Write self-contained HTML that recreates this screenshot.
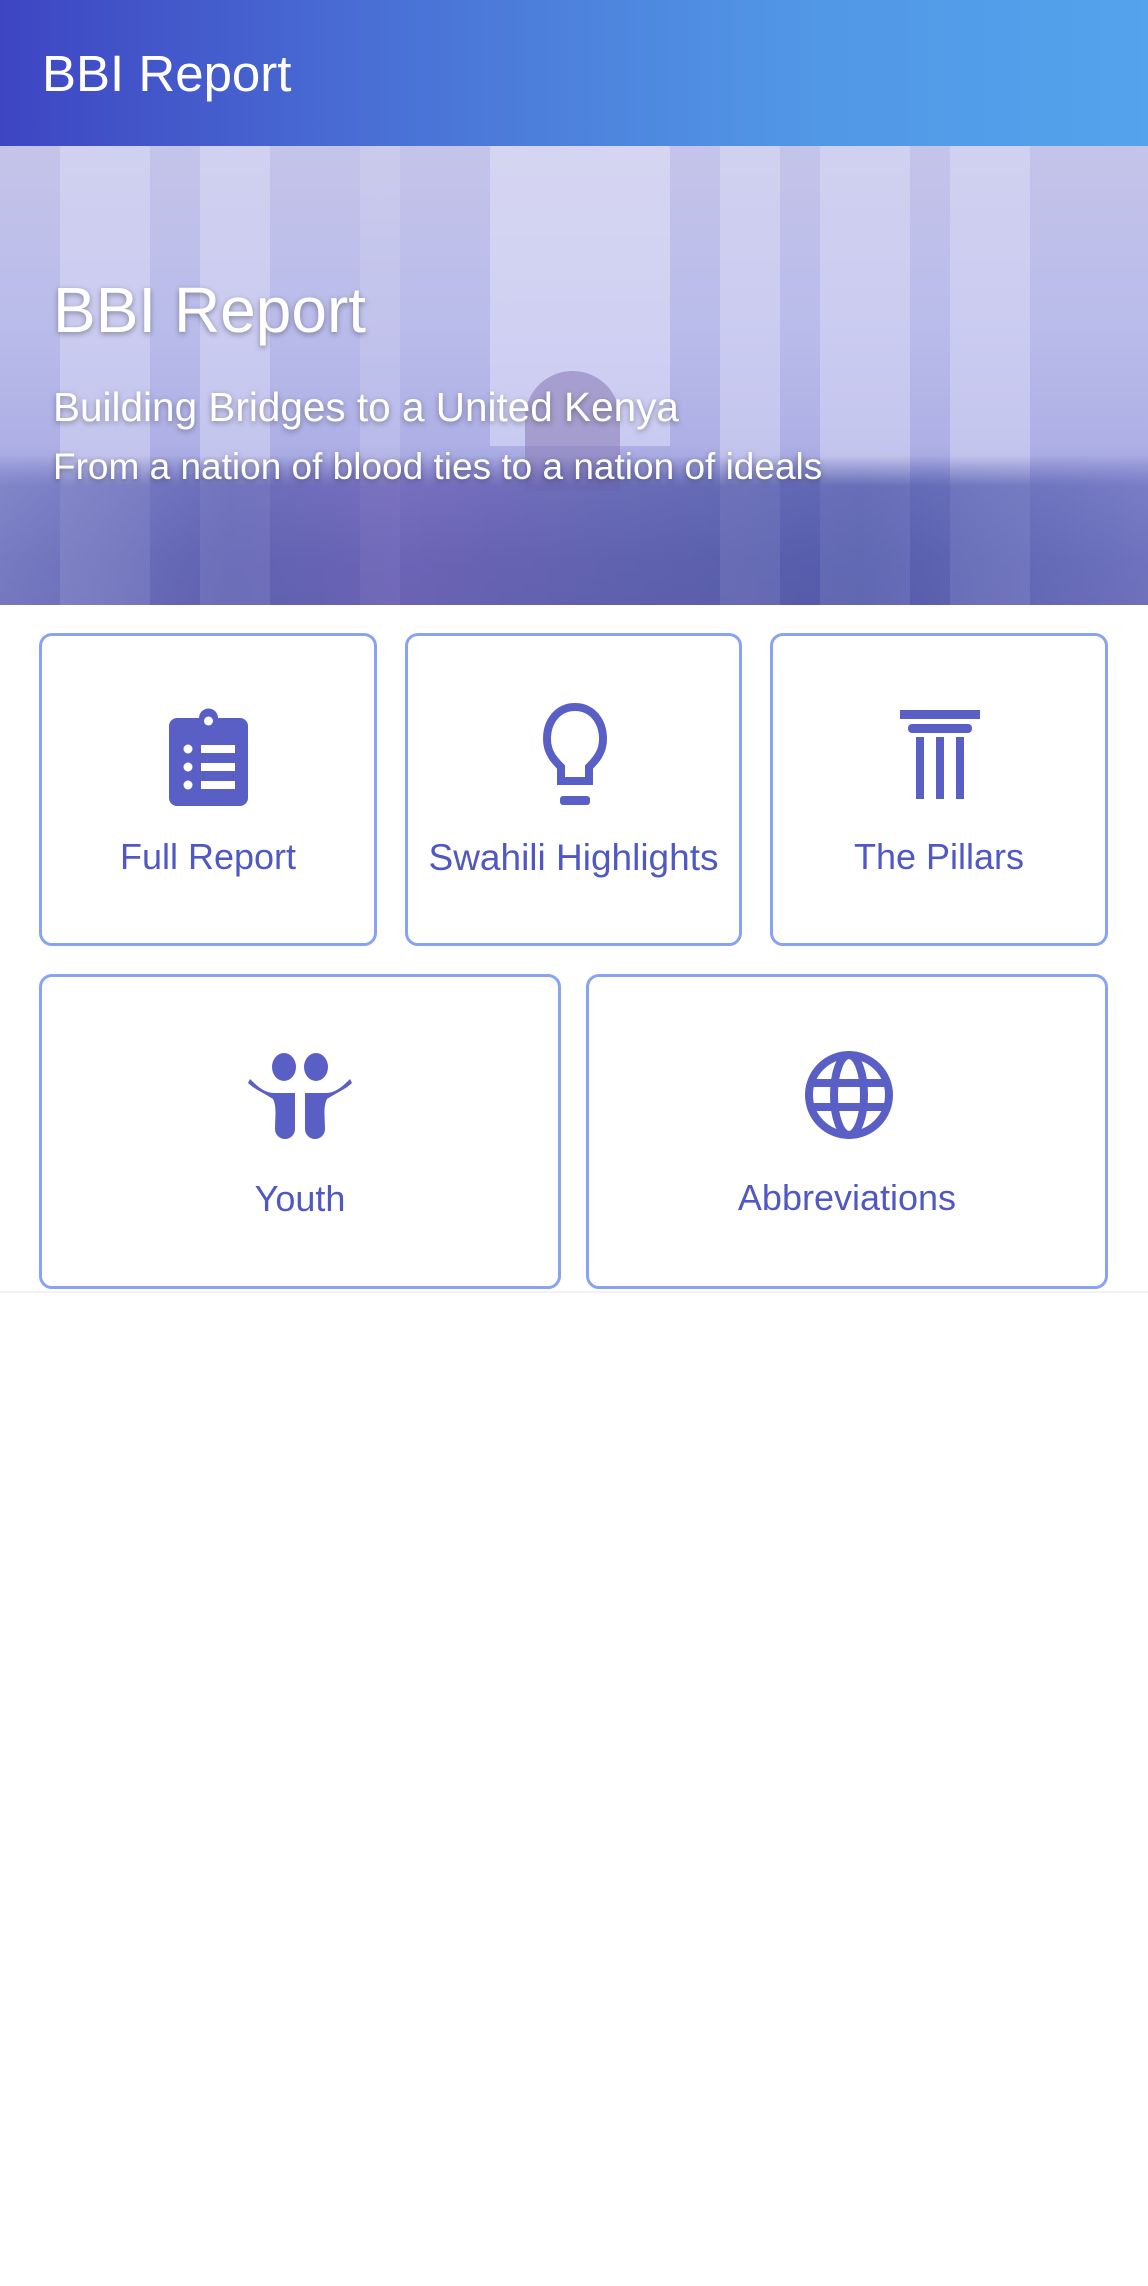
<!DOCTYPE html>
<html><head><meta charset="utf-8">
<style>
*{margin:0;padding:0;box-sizing:border-box}
body{width:1148px;height:2286px;background:#fff;font-family:"Liberation Sans",sans-serif;position:relative;overflow:hidden}
.hdr{position:absolute;left:0;top:0;width:1148px;height:146px;background:linear-gradient(90deg,#3e45c2 0%,#4a72d6 35%,#5197e6 70%,#54a3ec 100%)}
.hdr span{position:absolute;left:42px;top:44px;font-size:51px;color:#fff;line-height:60px}
.hero{position:absolute;left:0;top:146px;width:1148px;height:459px;overflow:hidden;
background:linear-gradient(180deg,#c4c4ea 0%,#b9bbea 40%,#aeb0e6 65%,#8d8fd0 78%,#6f70b8 90%,#6a68b0 100%)}
.col{position:absolute;top:0;background:rgba(225,225,248,.45)}
.crowd{position:absolute;left:0;top:310px;width:1148px;height:149px;background:linear-gradient(90deg,#7a7fc4,#5b5eb0 20%,#6c60b6 35%,#5a5eac 55%,#4d56a8 75%,#6f74c0 100%);opacity:.75;-webkit-mask-image:linear-gradient(180deg,transparent 0,#000 30px);mask-image:linear-gradient(180deg,transparent 0,#000 30px)}
.hero .t{position:absolute;left:53px;color:#fff;text-shadow:0 2px 6px rgba(0,0,0,.35)}
.card{position:absolute;border:3px solid #88a3f3;border-radius:13px;background:#fff}
.card .l{position:absolute;left:0;right:0;text-align:center;color:#5059c3;font-size:36px}
.card svg{position:absolute}
</style></head><body>
<div class="hdr"><span>BBI Report</span></div>
<div class="hero">
  <div class="col" style="left:60px;width:90px;height:459px"></div>
  <div class="col" style="left:200px;width:70px;height:459px"></div>
  <div class="col" style="left:360px;width:40px;height:459px;opacity:.5"></div>
  <div class="col" style="left:490px;width:180px;height:300px;background:rgba(235,235,252,.45)"></div>
  <div class="col" style="left:720px;width:60px;height:459px"></div>
  <div class="col" style="left:820px;width:90px;height:459px"></div>
  <div class="col" style="left:950px;width:80px;height:459px"></div>
  <div style="position:absolute;left:525px;top:225px;width:95px;height:120px;border-radius:48px 48px 0 0;background:#8c7fb8;opacity:.6"></div>
  <div class="crowd"></div>
  <div class="t" style="top:124px;font-size:64px;line-height:80px">BBI Report</div>
  <div class="t" style="top:237px;font-size:40.5px;line-height:48px">Building Bridges to a United Kenya</div>
  <div class="t" style="top:298px;font-size:37px;line-height:46px">From a nation of blood ties to a nation of ideals</div>
</div>

<div class="card" style="left:39px;top:633px;width:338px;height:313px">
  <svg style="left:127px;top:66px" width="79" height="104" viewBox="0 0 79 104">
    <path d="M8 16h22a9.5 9.5 0 0 1 19 0h22a8 8 0 0 1 8 8v72a8 8 0 0 1-8 8H8a8 8 0 0 1-8-8V24a8 8 0 0 1 8-8z" fill="#5a5fc5"/>
    <circle cx="39.5" cy="19" r="4.5" fill="#fff"/>
    <circle cx="19" cy="47" r="4.5" fill="#fff"/><rect x="32" y="43" width="34" height="8" fill="#fff"/>
    <circle cx="19" cy="65" r="4.5" fill="#fff"/><rect x="32" y="61" width="34" height="8" fill="#fff"/>
    <circle cx="19" cy="83" r="4.5" fill="#fff"/><rect x="32" y="79" width="34" height="8" fill="#fff"/>
  </svg>
  <div class="l" style="top:200px">Full Report</div>
</div>
<div class="card" style="left:405px;top:633px;width:337px;height:313px">
  <svg style="left:127px;top:66px" width="80" height="105" viewBox="0 0 80 105">
    <path d="M40 5C23 5 12 19 12 37c0 14 8 22 14 28v14h28V65c6-6 14-14 14-28C68 19 57 5 40 5z" fill="none" stroke="#5a5fc5" stroke-width="8"/>
    <rect x="25" y="94" width="30" height="9" rx="3" fill="#5a5fc5"/>
  </svg>
  <div class="l" style="top:201px;font-size:37px">Swahili Highlights</div>
</div>
<div class="card" style="left:770px;top:633px;width:338px;height:313px">
  <svg style="left:127px;top:74px" width="80" height="90" viewBox="0 0 80 90">
    <rect x="0" y="0" width="80" height="9" fill="#5a5fc5"/>
    <rect x="8" y="14" width="64" height="9" rx="4" fill="#5a5fc5"/>
    <rect x="16" y="27" width="8" height="62" fill="#5a5fc5"/>
    <rect x="36" y="27" width="8" height="62" fill="#5a5fc5"/>
    <rect x="56" y="27" width="8" height="62" fill="#5a5fc5"/>
  </svg>
  <div class="l" style="top:200px">The Pillars</div>
</div>
<div class="card" style="left:39px;top:974px;width:522px;height:315px">
  <svg style="left:206px;top:76px" width="104" height="86" viewBox="0 0 104 86">
    <ellipse cx="36" cy="14" rx="12" ry="14" fill="#5a5fc5"/>
    <ellipse cx="68" cy="14" rx="12" ry="14" fill="#5a5fc5"/>
    <path d="M2 26c6 6 14 14 24 14h21v36a10 10 0 0 1-20 0c0-12 2-22-2-30C16 40 6 36 0 30z" fill="#5a5fc5"/>
    <path d="M102 26c-6 6-14 14-24 14H57v36a10 10 0 0 0 20 0c0-12-2-22 2-30 9-6 19-10 25-16z" fill="#5a5fc5"/>
  </svg>
  <div class="l" style="top:201px">Youth</div>
</div>
<div class="card" style="left:586px;top:974px;width:522px;height:315px">
  <svg style="left:215px;top:73px" width="90" height="90" viewBox="0 0 90 90">
    <g fill="none" stroke="#5a5fc5" stroke-width="8">
      <circle cx="45" cy="45" r="40"/>
      <ellipse cx="45" cy="45" rx="15" ry="40"/>
      <line x1="5" y1="33" x2="85" y2="33"/>
      <line x1="5" y1="57" x2="85" y2="57"/>
    </g>
  </svg>
  <div class="l" style="top:200px">Abbreviations</div>
</div>
<div style="position:absolute;left:0;top:1291px;width:1148px;height:2px;background:#f2f2f4"></div>
</body></html>
